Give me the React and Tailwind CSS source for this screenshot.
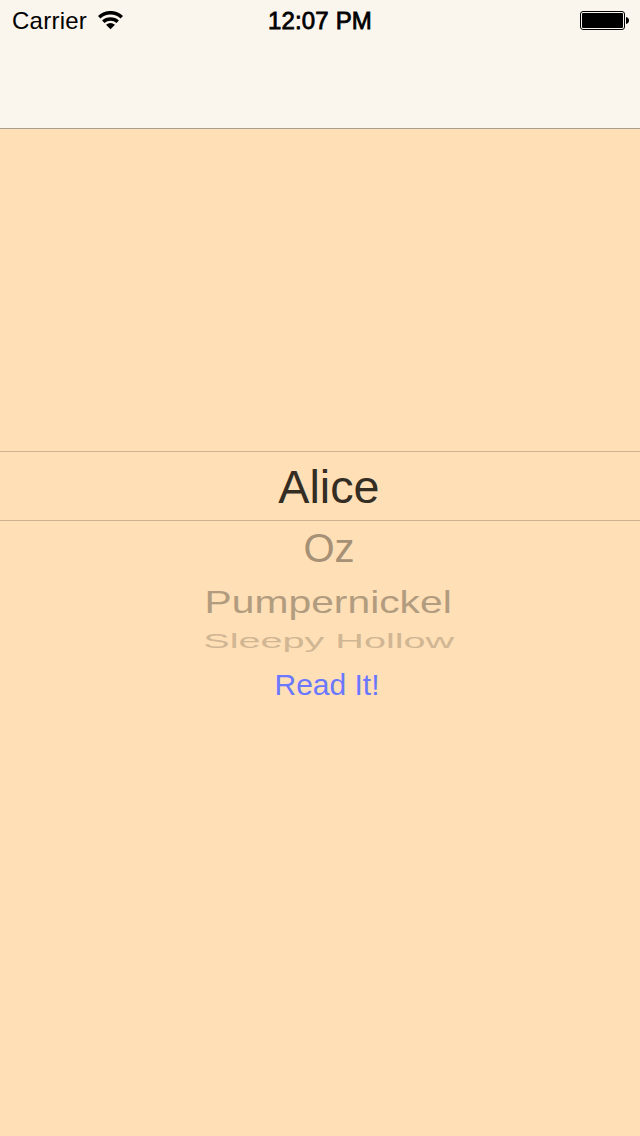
export default function App() {
  return (
    <div className="flex h-[1136px] w-[640px] flex-col overflow-hidden bg-[#ffdfb6] font-['Liberation_Sans',sans-serif] text-black">
      <header className="h-[129px] border-b border-[#a79d8c] bg-[#faf5ed]">
        <div className="grid h-[42px] grid-cols-3 items-center text-[24px] leading-10">
          <div className="flex items-center gap-[11px] pl-3">
            <span className="whitespace-nowrap tracking-[0.25px]">Carrier</span>
            <svg width="25" height="19" viewBox="0 0 25 19" fill="none" stroke="#000" strokeWidth="3.5" className="-mt-px">
              <path d="M1.2 6.2C7.4 .2 17.6 .2 23.8 6.2" />
              <path d="M5.3 10.8C9.3 7 15.7 7 19.7 10.8" />
              <path d="M12.5 18.2L8 13.8Q12.5 10.2 17 13.8z" fill="#000" stroke="none" />
            </svg>
          </div>
          <span className="text-center tracking-[0.15px] [-webkit-text-stroke:0.8px_#000]">12:07 PM</span>
          <div className="flex justify-end pr-[11px]">
            <svg width="49" height="19" viewBox="0 0 49 19" className="-mt-[2px]">
              <rect x="0.5" y="0.5" width="44" height="18" rx="2.5" fill="none" stroke="#000" />
              <rect x="2" y="2" width="41" height="15" rx="1" />
              <path d="M46 6q3 .8 3 3.5t-3 3.5z" />
            </svg>
          </div>
        </div>
      </header>
      <main className="flex flex-col items-center pt-[322px]">
        <div className="flex h-[70px] w-full items-center justify-center border-y border-[#ccb292] pt-[2px] pl-[18px] text-[46px] text-[#332d24]">
          <span className="scale-x-[1.015]">Alice</span>
        </div>
        <div className="flex h-[54px] w-full items-center justify-center pl-[18px] text-[40px] text-[#a69176]">
          <span>Oz</span>
        </div>
        <div className="flex h-[54px] w-full items-center justify-center pl-[17px] text-[40px] text-[#b29c7f]">
          <span className="scale-x-[1.02] scale-y-[0.79]">Pumpernickel</span>
        </div>
        <div className="flex h-[24px] w-full items-center justify-center pl-[17px] text-[40px] text-[#d1b694]">
          <span className="scale-x-[0.99] scale-y-50">Sleepy Hollow</span>
        </div>
        <button className="mt-[9px] pl-[14px] text-[30px] text-[#6a78ff]">Read It!</button>
      </main>
    </div>
  );
}
